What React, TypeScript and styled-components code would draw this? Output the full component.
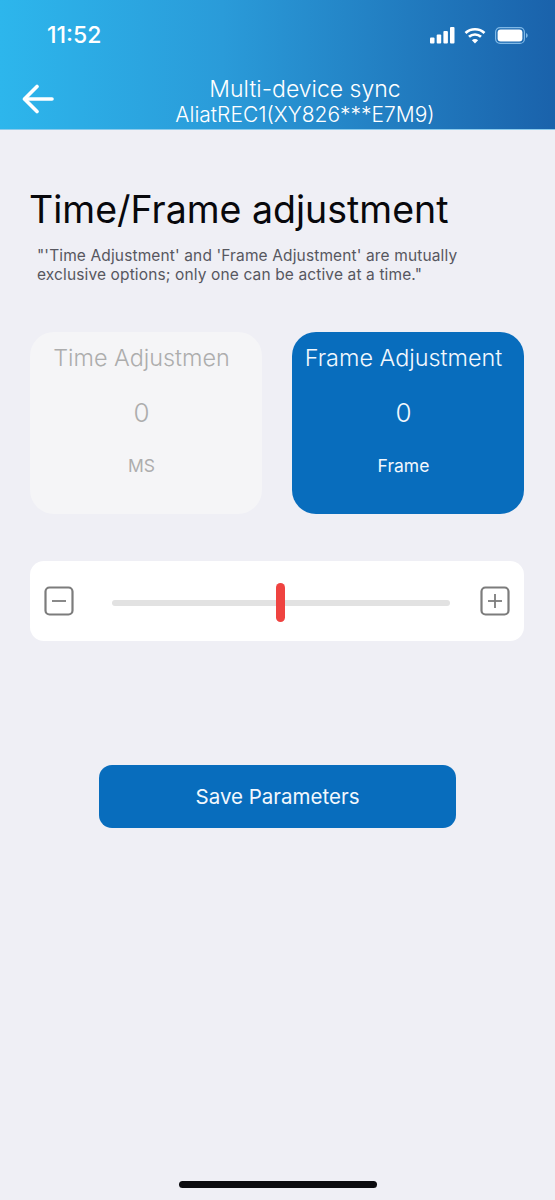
import styled, { createGlobalStyle } from "styled-components";

const GlobalStyle = createGlobalStyle`
  html, body {
    margin: 0;
    padding: 0;
    background: #efeff5;
    font-family: Inter, "Noto Sans", sans-serif;
  }
`;

const Page = styled.div`
  width: 555px;
  height: 1200px;
  background: #efeff5;
  display: flex;
  flex-direction: column;
  overflow: hidden;
`;

const Header = styled.header`
  height: 129px;
  flex: none;
  background: linear-gradient(90deg, #2db6ec 0%, #2a9bd9 40%, #1a62ab 100%);
  color: #fff;
  display: flex;
  flex-direction: column;
  border-bottom: 1px solid #8ccbec;
`;

const StatusBar = styled.div`
  height: 70px;
  padding: 0 27px 0 47px;
  display: flex;
  align-items: center;
  justify-content: space-between;
`;

const Clock = styled.span`
  font-size: 23px;
  font-weight: 500;
  line-height: 1;
`;

const StatusIcons = styled.div`
  display: flex;
  align-items: center;
  gap: 9px;
  margin-top: 1px;
`;

const NavBar = styled.div`
  display: grid;
  grid-template-columns: 100px 1fr 45px;
  align-items: center;
`;

const BackButton = styled.div`
  padding-left: 22px;
  display: flex;
  align-items: center;
`;

const NavTitle = styled.div`
  text-align: center;
  display: flex;
  flex-direction: column;
  align-items: center;
  margin-top: 6px;
  white-space: nowrap;
`;

const TitleMain = styled.div`
  font-size: 23px;
  line-height: 26px;
  font-weight: 300;
`;

const TitleSub = styled.div`
  font-size: 21px;
  line-height: 26px;
  font-weight: 300;
`;

const Content = styled.main`
  padding: 58px 31px 0 30px;
  display: flex;
  flex-direction: column;
`;

const Heading = styled.h1`
  margin: 0 0 0 -1px;
  font-size: 37.5px;
  line-height: 44px;
  font-weight: 400;
  color: #08080c;
`;

const Note = styled.p`
  margin: 14px 0 0 7px;
  font-size: 15.5px;
  line-height: 19px;
  letter-spacing: 0.13px;
  color: #57575f;
  width: 440px;
`;

const Cards = styled.div`
  margin-top: 48px;
  display: grid;
  grid-template-columns: 232px 232px;
  justify-content: space-between;
`;

const Card = styled.div<{ $active?: boolean }>`
  height: 182px;
  padding-right: 9px;
  box-sizing: border-box;
  border-radius: 24px;
  background: ${({ $active }) => ($active ? "#086dbd" : "#f5f5f7")};
  color: ${({ $active }) => ($active ? "#f2f8fd" : "#adadad")};
  display: flex;
  flex-direction: column;
  align-items: center;
  font-weight: 300;
`;

const CardTitle = styled.div`
  margin-top: 12px;
  font-size: 23.4px;
  line-height: 28px;
  white-space: nowrap;
`;

const CardValue = styled.div`
  margin-top: 25px;
  font-size: 26px;
  line-height: 32px;
`;

const CardUnit = styled.div`
  margin-top: 26px;
  font-size: 17.5px;
  line-height: 22px;
  font-weight: 400;
`;

const SliderPanel = styled.div`
  margin-top: 47px;
  height: 80px;
  background: #fff;
  border-radius: 14px;
  padding: 0 14px;
  display: flex;
  align-items: center;
  justify-content: space-between;
`;

const Track = styled.div`
  position: relative;
  margin: 4px 0 0 8px;
  width: 338px;
  height: 6px;
  border-radius: 3px;
  background: #e2e2e2;
`;

const Thumb = styled.div`
  position: absolute;
  left: 164px;
  top: -17px;
  width: 9px;
  height: 39px;
  border-radius: 4.5px;
  background: #ef4340;
`;

const SaveButton = styled.button`
  display: block;
  margin: 124px 0 0 69px;
  width: 357px;
  height: 63px;
  border: none;
  border-radius: 13px;
  background: #086dbd;
  color: #f2f8fd;
  font-family: inherit;
  font-size: 20.5px;
  font-weight: 400;
`;

const HomeIndicator = styled.div`
  position: absolute;
  left: 179px;
  top: 1181px;
  width: 198px;
  height: 7px;
  border-radius: 4px;
  background: #0b0b0f;
`;

const SignalIcon = () => (
  <svg width="25" height="17" viewBox="0 0 25 17" fill="#fff">
    <rect x="0" y="10.5" width="4.5" height="6" rx="1" />
    <rect x="6.7" y="7.5" width="4.5" height="9" rx="1" />
    <rect x="13.4" y="4" width="4.5" height="12.5" rx="1" />
    <rect x="20" y="0" width="4.5" height="16.5" rx="1" />
  </svg>
);

const WifiIcon = () => (
  <svg width="22" height="17" viewBox="0 0 22 17" fill="none" stroke="#fff" strokeWidth="2.7">
    <path d="M1.5 6C6.8 1 15.2 1 20.5 6" />
    <path d="M5 9.8C8.4 6.7 13.6 6.7 17 9.8" />
    <path d="M11 16.5L7.9 13.2C9.7 11.7 12.3 11.7 14.1 13.2Z" fill="#fff" stroke="none" />
  </svg>
);

const BatteryIcon = () => (
  <svg width="33" height="17" viewBox="0 0 33 17" fill="none">
    <rect x="0.6" y="0.6" width="28.8" height="15.8" rx="4.5" stroke="#7fb8e6" strokeWidth="1.2" />
    <rect x="2.6" y="2.6" width="24.8" height="11.8" rx="3" fill="#fff" />
    <path d="M31 6v5c1-.4 1.7-1.4 1.7-2.5S32 6.400 31 6Z" fill="#7fb8e6" />
  </svg>
);

const BackIcon = () => (
  <svg width="32" height="30" viewBox="0 0 32 30" fill="none" stroke="#fff" strokeWidth="3.6" strokeLinecap="round" strokeLinejoin="round">
    <path d="M30 15H3" />
    <path d="M15 2.500L2.500 15L15 27.500" />
  </svg>
);

const StepIcon = ({ plus }: { plus?: boolean }) => (
  <svg width="30" height="30" viewBox="0 0 30 30" fill="none" stroke="#7c7c7c">
    <rect x="1.500" y="1.500" width="27" height="27" rx="4" strokeWidth="2.2" />
    <path d="M8 15H22" strokeWidth="1.8" />
    {plus && <path d="M15 8V22" strokeWidth="1.8" />}
  </svg>
);

export default function App() {
  return (
    <Page>
      <GlobalStyle />
      <Header>
        <StatusBar>
          <Clock>11:52</Clock>
          <StatusIcons>
            <SignalIcon />
            <WifiIcon />
            <BatteryIcon />
          </StatusIcons>
        </StatusBar>
        <NavBar>
          <BackButton>
            <BackIcon />
          </BackButton>
          <NavTitle>
            <TitleMain>Multi-device sync</TitleMain>
            <TitleSub>AliatREC1(XY826***E7M9)</TitleSub>
          </NavTitle>
        </NavBar>
      </Header>
      <Content>
        <Heading>Time/Frame adjustment</Heading>
        <Note>"'Time Adjustment' and 'Frame Adjustment' are mutually exclusive options; only one can be active at a time."</Note>
        <Cards>
          <Card>
            <CardTitle>Time Adjustmen</CardTitle>
            <CardValue>0</CardValue>
            <CardUnit>MS</CardUnit>
          </Card>
          <Card $active>
            <CardTitle>Frame Adjustment</CardTitle>
            <CardValue>0</CardValue>
            <CardUnit>Frame</CardUnit>
          </Card>
        </Cards>
        <SliderPanel>
          <StepIcon />
          <Track>
            <Thumb />
          </Track>
          <StepIcon plus />
        </SliderPanel>
        <SaveButton>Save Parameters</SaveButton>
      </Content>
      <HomeIndicator />
    </Page>
  );
}
